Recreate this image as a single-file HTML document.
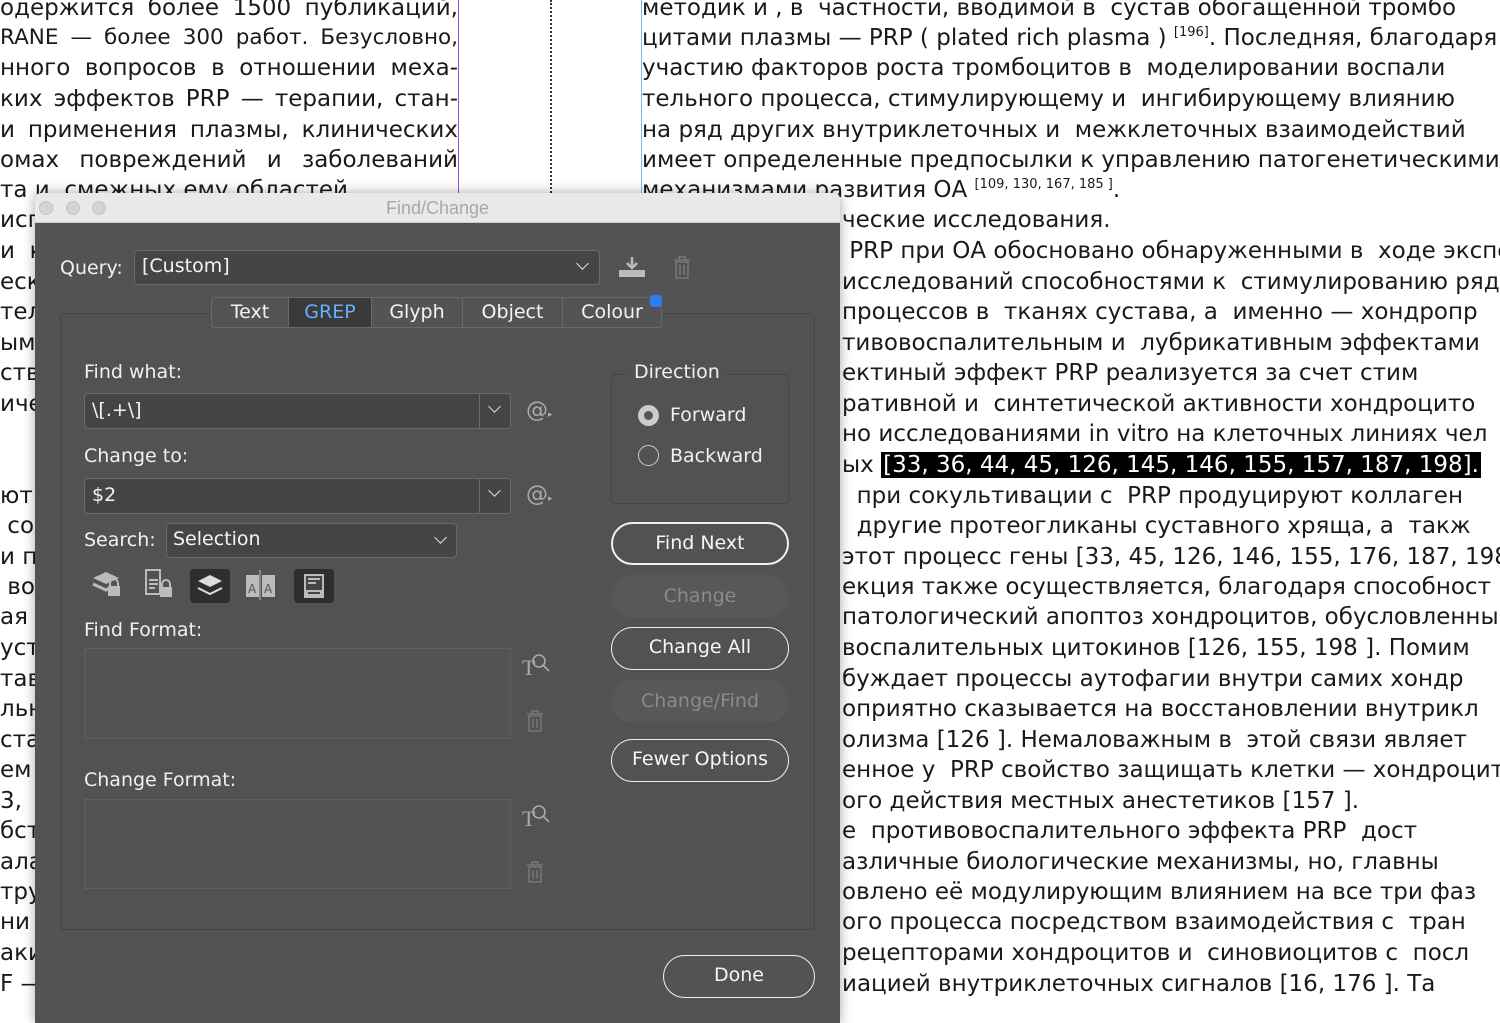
<!DOCTYPE html>
<html><head><meta charset="utf-8"><style>
*{margin:0;padding:0;box-sizing:border-box}
body{width:1500px;height:1004px;overflow:hidden;background:#fff;position:relative;font-family:"DejaVu Sans","Liberation Sans",sans-serif}
.t{position:absolute;white-space:pre;font-size:23px;color:#1a1a1a;line-height:30px;height:30px}
.L{left:0;width:458px;white-space:normal;text-align:justify;text-align-last:justify;overflow:hidden}
.R{left:842px}
.R2{left:642px}
.F{left:0;width:35px;overflow:hidden}
sup{font-size:13px;line-height:0;vertical-align:0;position:relative;top:-9px}
.dlg{position:absolute;left:35px;top:193px;width:805px;height:830px;background:#535353;box-shadow:0 0 12px rgba(0,0,0,.35);border-radius:6px 6px 0 0;overflow:hidden}
.tb{height:30px;background:#e9e9e9;border-bottom:1px solid #cfcfcf;text-align:center;color:#a8a8a8;font-size:18px;line-height:30px;font-family:"Liberation Sans",sans-serif}
.dot{position:absolute;top:8px;width:14px;height:14px;border-radius:50%;background:#d4d4d4;border:1px solid #c4c4c4}
.a{position:absolute;color:#f0f0f0;font-size:19px;white-space:nowrap}
.inp{position:absolute;background:#454545;border:1.5px solid #6a6a6a;border-radius:4px;color:#f4f4f4;font-size:19px;padding-left:7px}
.btn{position:absolute;width:178px;height:43px;border:2px solid #f0f0f0;border-radius:22px;color:#f6f6f6;font-size:19px;text-align:center;line-height:39px}
.dis{border:none;background:#585858;color:#8a8a8a;line-height:43px}
.chev{position:absolute;width:9px;height:9px;border-right:1.6px solid #ddd;border-bottom:1.6px solid #ddd;transform:rotate(45deg)}
.box{position:absolute;border:1px solid #606060;background:#535353}
.ic{position:absolute;color:#9a9a9a}
</style></head><body>
<div style="position:absolute;left:458px;top:0;width:1px;height:193px;background:#9b4fe0"></div>
<div style="position:absolute;left:550px;top:0;width:0;height:193px;border-left:2px dotted #333"></div>
<div style="position:absolute;left:641px;top:0;width:1px;height:193px;background:#8ab4f0"></div>

<div class="t L" style="top:-7px">одержится более 1500 публикаций,</div>
<div class="t L" style="top:23px;font-size:21.5px">RANE — более 300 работ. Безусловно,</div>
<div class="t L" style="top:53px">нного вопросов в  отношении меха-</div>
<div class="t L" style="top:84px">ких эффектов PRP — терапии, стан-</div>
<div class="t L" style="top:115px">и применения плазмы, клинических</div>
<div class="t L" style="top:145px">омах повреждений и  заболеваний</div>
<div class="t" style="top:175px;left:0">та и  смежных ему областей</div>

<div class="t R2" style="top:-7px">методик и , в  частности, вводимой в  сустав обогащенной тромбо</div>
<div class="t R2" style="top:23px">цитами плазмы — PRP ( plated rich plasma ) <sup>[196]</sup>. Последняя, благодаря</div>
<div class="t R2" style="top:53px">участию факторов роста тромбоцитов в  моделировании воспали</div>
<div class="t R2" style="top:84px">тельного процесса, стимулирующему и  ингибирующему влиянию</div>
<div class="t R2" style="top:115px">на ряд других внутриклеточных и  межклеточных взаимодействий</div>
<div class="t R2" style="top:145px">имеет определенные предпосылки к управлению патогенетическими</div>
<div class="t R2" style="top:175px">механизмами развития ОА <sup>[109, 130, 167, 185 ]</sup>.</div>

<div class="t R" style="top:205px">ческие исследования.</div>
<div class="t R" style="top:236px"> PRP при ОА обосновано обнаруженными в  ходе экспе</div>
<div class="t R" style="top:267px">исследований способностями к  стимулированию ряда</div>
<div class="t R" style="top:297px">процессов в  тканях сустава, а  именно — хондропр</div>
<div class="t R" style="top:328px">тивовоспалительным и  лубрикативным эффектами</div>
<div class="t R" style="top:358px">ектиный эффект PRP реализуется за счет стим</div>
<div class="t R" style="top:389px">ративной и  синтетической активности хондроцито</div>
<div class="t R" style="top:419px">но исследованиями in vitro на клеточных линиях чел</div>
<div class="t R" style="top:450px">ых <span style="background:#000;color:#fff;padding:0 2px">[33, 36, 44, 45, 126, 145, 146, 155, 157, 187, 198].</span></div>
<div class="t R" style="top:481px">  при сокультивации с  PRP продуцируют коллаген</div>
<div class="t R" style="top:511px">  другие протеогликаны суставного хряща, а  такж</div>
<div class="t R" style="top:542px">этот процесс гены [33, 45, 126, 146, 155, 176, 187, 198</div>
<div class="t R" style="top:572px">екция также осуществляется, благодаря способност</div>
<div class="t R" style="top:602px">патологический апоптоз хондроцитов, обусловленны</div>
<div class="t R" style="top:633px">воспалительных цитокинов [126, 155, 198 ]. Помим</div>
<div class="t R" style="top:664px">буждает процессы аутофагии внутри самих хондр</div>
<div class="t R" style="top:694px">оприятно сказывается на восстановлении внутрикл</div>
<div class="t R" style="top:725px">олизма [126 ]. Немаловажным в  этой связи являет</div>
<div class="t R" style="top:755px">енное у  PRP свойство защищать клетки — хондроцит</div>
<div class="t R" style="top:786px">ого действия местных анестетиков [157 ].</div>
<div class="t R" style="top:816px">е  противовоспалительного эффекта PRP  дост</div>
<div class="t R" style="top:847px">азличные биологические механизмы, но, главны</div>
<div class="t R" style="top:877px">овлено её модулирующим влиянием на все три фаз</div>
<div class="t R" style="top:907px">ого процесса посредством взаимодействия с  тран</div>
<div class="t R" style="top:938px">рецепторами хондроцитов и  синовиоцитов с  посл</div>
<div class="t R" style="top:969px">иацией внутриклеточных сигналов [16, 176 ]. Та</div>

<div class="t F" style="top:205px">исп</div><div class="t F" style="top:236px">и  к</div><div class="t F" style="top:267px">еск</div><div class="t F" style="top:297px">тел</div><div class="t F" style="top:328px">ым</div><div class="t F" style="top:358px">ств</div><div class="t F" style="top:389px">иче</div>
<div class="t F" style="top:481px">ют</div><div class="t F" style="top:511px"> со</div><div class="t F" style="top:542px">и пр</div><div class="t F" style="top:572px"> во</div><div class="t F" style="top:602px">ая</div><div class="t F" style="top:633px">уст</div><div class="t F" style="top:664px">тав</div><div class="t F" style="top:694px">льн</div><div class="t F" style="top:725px">ста</div><div class="t F" style="top:755px">ем</div><div class="t F" style="top:786px">3,</div><div class="t F" style="top:816px">бст</div><div class="t F" style="top:847px">ала</div><div class="t F" style="top:877px">тру</div><div class="t F" style="top:907px">ни</div><div class="t F" style="top:938px">аки</div><div class="t F" style="top:969px">F —</div>

<div class="dlg">
 <div class="tb">Find/Change</div>
 <div class="dot" style="left:4px"></div><div class="dot" style="left:31px"></div><div class="dot" style="left:57px"></div>
 <div class="a" style="left:25px;top:64px">Query:</div>
 <div class="inp" style="left:99px;top:57px;width:466px;height:35px;line-height:31px">[Custom]</div>
 <div class="chev" style="left:543px;top:66px"></div>
 <svg class="ic" style="left:582px;top:62px" width="30" height="24"><path d="M15 2v10M10 8l5 5 5-5" stroke="#bbb" stroke-width="2.5" fill="none"/><rect x="2" y="15" width="26" height="7" fill="#bbb"/></svg>
 <svg class="ic" style="left:637px;top:63px" width="20" height="24"><path d="M2 4h16M7 4V1h6v3M4 6h12v16H4zM8 9v10M12 9v10" stroke="#777" stroke-width="1.6" fill="none"/></svg>

 <div style="position:absolute;left:25px;top:120px;width:755px;height:617px;border:1.5px solid #444;border-radius:4px;background:#525252"></div>
 <div style="position:absolute;left:176px;top:104px;width:451px;height:31px;background:#545454;border:1.5px solid #6a6a6a;border-radius:3px;display:flex;font-size:19px;color:#f4f4f4;line-height:28px">
  <div style="width:77px;text-align:center;border-right:1px solid #6a6a6a">Text</div>
  <div style="width:83px;text-align:center;background:#3a3a3a;color:#66b0ff;border-right:1px solid #6a6a6a">GREP</div>
  <div style="width:91px;text-align:center;border-right:1px solid #6a6a6a">Glyph</div>
  <div style="width:100px;text-align:center;border-right:1px solid #6a6a6a">Object</div>
  <div style="flex:1;text-align:center">Colour</div>
 </div>
 <div style="position:absolute;left:615px;top:102px;width:12px;height:12px;background:#2f7cf6;border-radius:3px"></div>

 <div class="a" style="left:49px;top:168px">Find what:</div>
 <div class="inp" style="left:49px;top:200px;width:427px;height:36px;line-height:32px">\[.+\]</div>
 <div style="position:absolute;left:444px;top:201px;width:1px;height:34px;background:#6a6a6a"></div>
 <div class="chev" style="left:455px;top:209px"></div>
 <div class="a" style="left:491px;top:205px;color:#aaa;font-size:22px">@<span style="font-size:9px">▸</span></div>
 <div class="a" style="left:49px;top:252px">Change to:</div>
 <div class="inp" style="left:49px;top:285px;width:427px;height:36px;line-height:32px">$2</div>
 <div style="position:absolute;left:444px;top:286px;width:1px;height:34px;background:#6a6a6a"></div>
 <div class="chev" style="left:455px;top:293px"></div>
 <div class="a" style="left:491px;top:289px;color:#aaa;font-size:22px">@<span style="font-size:9px">▸</span></div>
 <div class="a" style="left:49px;top:336px">Search:</div>
 <div class="inp" style="left:131px;top:330px;width:291px;height:35px;line-height:31px;padding-left:6px">Selection</div>
 <div class="chev" style="left:401px;top:340px"></div>

 <svg style="position:absolute;left:56px;top:376px" width="32" height="30"><path d="M2 9l13-6 13 6-13 6z" fill="#bbb"/><path d="M2 15l13 6 6-3" stroke="#bbb" stroke-width="3" fill="none"/><rect x="17" y="17" width="12" height="10" fill="#bbb"/><path d="M19 17v-3a4 4 0 0 1 8 0v3" stroke="#bbb" stroke-width="2" fill="none"/></svg>
 <svg style="position:absolute;left:108px;top:375px" width="32" height="32"><path d="M3 2h14v24H3z" stroke="#bbb" stroke-width="2" fill="none"/><path d="M6 12h9M6 16h9M6 20h6" stroke="#bbb" stroke-width="2"/><rect x="17" y="19" width="12" height="10" fill="#bbb"/><path d="M19 19v-3a4 4 0 0 1 8 0v3" stroke="#bbb" stroke-width="2" fill="none"/></svg>
 <div style="position:absolute;left:155px;top:376px;width:40px;height:34px;background:#2e2e2e;border-radius:4px"></div>
 <svg style="position:absolute;left:160px;top:380px" width="30" height="26"><path d="M3 8l12-6 12 6-12 6z" fill="#ddd"/><path d="M3 15l12 6 12-6" stroke="#ddd" stroke-width="2" fill="none"/></svg>
 <svg style="position:absolute;left:210px;top:376px" width="32" height="32"><rect x="1" y="6" width="13" height="22" fill="#bbb"/><rect x="17" y="6" width="13" height="22" fill="#bbb"/><path d="M15 1v30" stroke="#bbb"/><text x="3" y="24" font-size="12" fill="#555" font-family="DejaVu Sans">A</text><text x="19" y="24" font-size="12" fill="#555" font-family="DejaVu Sans">A</text></svg>
 <div style="position:absolute;left:259px;top:376px;width:40px;height:34px;background:#2e2e2e;border-radius:4px"></div>
 <svg style="position:absolute;left:268px;top:380px" width="22" height="26"><rect x="1" y="1" width="20" height="24" fill="#bbb"/><rect x="3" y="3" width="16" height="14" fill="#444"/><path d="M5 6h12M5 10h8" stroke="#bbb" stroke-width="2"/><path d="M5 20h12" stroke="#444" stroke-width="2"/></svg>

 <div class="a" style="left:49px;top:426px">Find Format:</div>
 <div class="box" style="left:49px;top:455px;width:427px;height:91px"></div>
 <svg style="position:absolute;left:487px;top:458px" width="30" height="28"><text x="0" y="24" font-size="22" fill="#aaa" font-family="Liberation Serif">T</text><circle cx="17" cy="10" r="6" stroke="#aaa" stroke-width="1.6" fill="none"/><path d="M21 14l6 6" stroke="#aaa" stroke-width="1.6"/></svg>
 <svg style="position:absolute;left:491px;top:517px" width="18" height="22"><path d="M1 4h16M6 4V1h6v3M3 6h12v15H3zM7 9v9M11 9v9" stroke="#777" stroke-width="1.5" fill="none"/></svg>
 <div class="a" style="left:49px;top:576px">Change Format:</div>
 <div class="box" style="left:49px;top:606px;width:427px;height:90px"></div>
 <svg style="position:absolute;left:487px;top:609px" width="30" height="28"><text x="0" y="24" font-size="22" fill="#aaa" font-family="Liberation Serif">T</text><circle cx="17" cy="10" r="6" stroke="#aaa" stroke-width="1.6" fill="none"/><path d="M21 14l6 6" stroke="#aaa" stroke-width="1.6"/></svg>
 <svg style="position:absolute;left:491px;top:668px" width="18" height="22"><path d="M1 4h16M6 4V1h6v3M3 6h12v15H3zM7 9v9M11 9v9" stroke="#777" stroke-width="1.5" fill="none"/></svg>

 <div style="position:absolute;left:576px;top:181px;width:178px;height:130px;border:1.5px solid #444;border-radius:4px"></div>
 <div class="a" style="left:592px;top:168px;background:#525252;padding:0 7px">Direction</div>
 <div style="position:absolute;left:603px;top:212px;width:21px;height:21px;border-radius:50%;background:#ccc"><div style="margin:6px;width:9px;height:9px;border-radius:50%;background:#555"></div></div>
 <div class="a" style="left:635px;top:211px">Forward</div>
 <div style="position:absolute;left:603px;top:252px;width:21px;height:21px;border-radius:50%;border:1.5px solid #ccc"></div>
 <div class="a" style="left:635px;top:252px">Backward</div>

 <div class="btn" style="left:576px;top:329px;border-width:2.5px">Find Next</div>
 <div class="btn dis" style="left:576px;top:382px">Change</div>
 <div class="btn" style="left:576px;top:434px;border-width:1.5px">Change All</div>
 <div class="btn dis" style="left:576px;top:487px">Change/Find</div>
 <div class="btn" style="left:576px;top:546px;border-width:1.5px">Fewer Options</div>
 <div class="btn" style="left:628px;top:762px;width:152px;border-width:1.5px">Done</div>
</div>
</body></html>
